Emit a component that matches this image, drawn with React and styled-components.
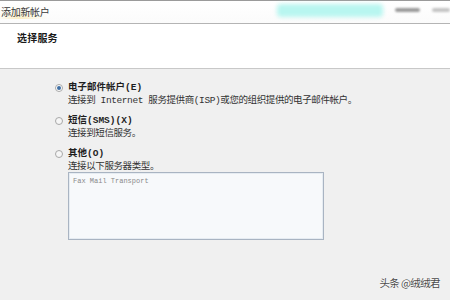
import React from 'react';
import styled, { createGlobalStyle } from 'styled-components';

const Global = createGlobalStyle`
  html, body {
    margin: 0;
    padding: 0;
    background: #f0f0f0;
  }
  body {
    font-family: "Liberation Mono", "Noto Sans CJK SC", monospace;
  }
`;

const Window = styled.div`
  width: 450px;
  height: 300px;
  display: flex;
  flex-direction: column;
  position: relative;
  overflow: hidden;
  background: #f0f0f0;
`;

const TitleBar = styled.div`
  height: 22px;
  display: flex;
  align-items: center;
  border-top: 1px solid #9a9a9a;
  border-bottom: 1px solid #b4b4b4;
  background: linear-gradient(180deg, #ffffff 0%, #fbfbfb 100%);
  position: relative;
`;

const Title = styled.span`
  font-family: "Noto Sans CJK SC", sans-serif;
  font-size: 10px;
  color: #3a3a3a;
  padding-left: 1px;
  margin-top: -2px;
  letter-spacing: -0.3px;
  background: radial-gradient(ellipse at 40% 120%, rgba(250, 220, 120, 0.55) 0%, rgba(255, 240, 190, 0.2) 45%, transparent 70%);
`;

const Glow = styled.div`
  width: 106px;
  height: 13px;
  margin-left: auto;
  margin-top: -4px;
  border-radius: 4px;
  background: #b8f6f0;
  filter: blur(2px);
`;

const Blur = styled.div`
  width: ${p => p.w}px;
  height: 4px;
  margin-left: ${p => p.gap}px;
  margin-top: -4px;
  background: ${p => p.c};
  filter: blur(1.2px);
  border-radius: 2px;
`;

const Header = styled.div`
  height: 45px;
  background: #ffffff;
  border-bottom: 1px solid #c8c8c8;
  padding: 6px 0 0 17px;
  box-sizing: border-box;
`;

const HeaderText = styled.div`
  font-family: "Noto Sans CJK SC", sans-serif;
  font-weight: 700;
  font-size: 10px;
  color: #1a1a1a;
  letter-spacing: 0.2px;
`;

const Body = styled.div`
  flex: 1;
  padding: 13px 0 0 55px;
  display: flex;
  flex-direction: column;
  gap: 8px;
`;

const Option = styled.div`
  display: grid;
  grid-template-columns: 13px 1fr;
  row-gap: 1px;
`;

const Radio = styled.span`
  width: 6px;
  height: 6px;
  border-radius: 50%;
  border: 1px solid #a8a8a8;
  background: ${p => (p.checked ? '#ffffff' : '#f6f6f6')};
  align-self: center;
  display: flex;
  align-items: center;
  justify-content: center;
  &::after {
    content: '';
    width: 4px;
    height: 4px;
    border-radius: 50%;
    background: ${p => (p.checked ? '#3f6fa4' : 'transparent')};
  }
`;

const Label = styled.div`
  font-weight: 700;
  font-size: 9.5px;
  line-height: 12px;
  color: #1e1e1e;
`;

const Desc = styled.div`
  grid-column: 2;
  font-size: 9.5px;
  line-height: 12px;
  color: #333333;
  letter-spacing: -0.4px;
  white-space: nowrap;
`;

const TypeBox = styled.div`
  grid-column: 2;
  width: 256px;
  height: 68px;
  margin-top: -2px;
  border: 1px solid #a9b4c2;
  background: #f7f9fb;
  box-shadow: inset 0 0 0 1px #e6ecf2;
  box-sizing: border-box;
  padding: 4px 0 0 4px;
  font-family: "Liberation Mono", monospace;
  font-size: 7px;
  color: #8a8a8a;
`;

const Watermark = styled.div`
  position: absolute;
  right: 10px;
  bottom: 10px;
  font-family: "Noto Sans CJK SC", sans-serif;
  font-size: 10.5px;
  letter-spacing: -0.6px;
  color: #4a4a4a;
  text-shadow: 0 0 2px #ffffff, 0 0 1px #ffffff;
`;

const options = [
  {
    label: '电子邮件帐户(E)',
    desc: '连接到 Internet 服务提供商(ISP)或您的组织提供的电子邮件帐户。',
    checked: true,
  },
  { label: '短信(SMS)(X)', desc: '连接到短信服务。' },
  { label: '其他(O)', desc: '连接以下服务器类型。', box: 'Fax Mail Transport' },
];

export default function App() {
  return (
    <Window>
      <Global />
      <TitleBar>
        <Title>添加新帐户</Title>
        <Glow />
        <Blur w={25} gap={12} c="#9a9a9a" />
        <Blur w={18} gap={12} c="#c4c4c4" />
      </TitleBar>
      <Header>
        <HeaderText>选择服务</HeaderText>
      </Header>
      <Body>
        {options.map(o => (
          <Option key={o.label}>
            <Radio checked={o.checked} />
            <Label>{o.label}</Label>
            <Desc>{o.desc}</Desc>
            {o.box && <TypeBox>{o.box}</TypeBox>}
          </Option>
        ))}
      </Body>
      <Watermark>头条 @绒绒君</Watermark>
    </Window>
  );
}
